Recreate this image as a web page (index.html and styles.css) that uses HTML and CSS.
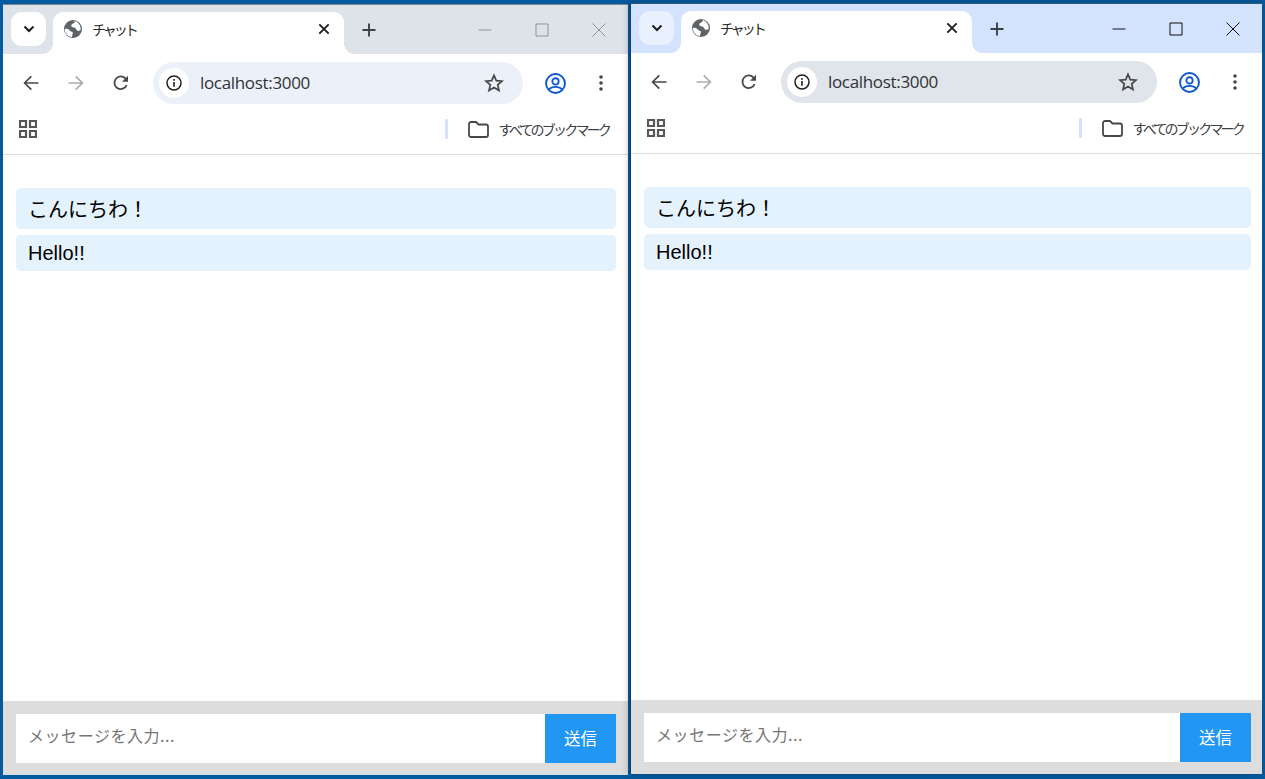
FILE: index.html
```html
<!DOCTYPE html>
<html lang="ja">
<head>
<meta charset="utf-8">
<title>チャット</title>
<link rel="stylesheet" href="styles.css">
</head>
<body>
<svg class="defs" width="0" height="0" aria-hidden="true">
  <symbol id="i-chevron" viewBox="0 0 12 8"><path d="M1.5 1.5 6 6l4.5-4.5" fill="none" stroke="currentColor" stroke-width="2.1"/></symbol>
  <symbol id="i-globe" viewBox="0 0 18 18"><circle cx="9" cy="9" r="9" fill="#5f6368"/><path d="M10.6.9c.2 1.3-.5 2.2-1.6 2.6-1.2.5-1.9 1.2-1.7 2.3.2 1.200 1.300 1.500 2.500 1.700 1.800.3 2.300 1.400 2.900 2.500.5.800 1.200 1.100 2.200.8.600-.2 1.200-.4 1.700-.7.200-1.900-.1-3.700-1.100-5.300C14.300 2.500 12.600 1.300 10.600.9Z" fill="#fff"/><path d="M.7 9.200c1.500-.8 3.100-.5 4.300.6 1 .9 1.500 1.800 2.800 2 1 .2 1.200 1 .9 1.900-.3 1-.6 2.100-.8 3.400C4.100 16.700 1 13.500.7 9.200Z" fill="#fff"/></symbol>
  <symbol id="i-back" viewBox="0 0 16 16"><path d="M15.500 8H1.800M8.300 1.300 1.600 8l6.700 6.700" fill="none" stroke="currentColor" stroke-width="1.700"/></symbol>
  <symbol id="i-forward" viewBox="0 0 16 16"><path d="M.5 8h13.700M7.700 1.300 14.400 8l-6.700 6.700" fill="none" stroke="currentColor" stroke-width="1.700"/></symbol>
  <symbol id="i-reload" viewBox="0 0 16 16"><path d="M13.600 10.100A6.300 6.300 0 1 1 12.500 3.600l1.400 1.500" fill="none" stroke="currentColor" stroke-width="1.800"/><path d="M15 .8v6h-6z" fill="currentColor"/></symbol>
  <symbol id="i-info" viewBox="0 0 16 16"><circle cx="8" cy="8" r="7" fill="none" stroke="currentColor" stroke-width="1.500"/><path d="M7.200 7h1.600v4.800H7.200zM7.200 4h1.600v1.700H7.200z" fill="currentColor"/></symbol>
  <symbol id="i-star" viewBox="0 0 20 20"><path d="m10 2.300 2.300 5.300 5.800.5-4.400 3.800 1.300 5.700-5-3-5 3 1.300-5.700L1.900 8.100l5.800-.5z" fill="none" stroke="currentColor" stroke-width="1.700" stroke-linejoin="miter"/></symbol>
  <symbol id="i-profile" viewBox="0 0 20 20"><circle cx="10" cy="10" r="9" fill="none" stroke="currentColor" stroke-width="1.800"/><circle cx="10" cy="8" r="3" fill="none" stroke="currentColor" stroke-width="1.700"/><path d="M3.800 15.500c1.500-1.600 3.600-2.300 6.200-2.300s4.700.7 6.200 2.300" fill="none" stroke="currentColor" stroke-width="1.700"/></symbol>
  <symbol id="i-kebab" viewBox="0 0 4 16"><circle cx="2" cy="2" r="1.800" fill="currentColor"/><circle cx="2" cy="8" r="1.800" fill="currentColor"/><circle cx="2" cy="14" r="1.800" fill="currentColor"/></symbol>
  <symbol id="i-apps" viewBox="0 0 18 18"><path d="M1 1h6v6H1zM11 1h6v6h-6zM1 11h6v6H1zM11 11h6v6h-6z" fill="none" stroke="currentColor" stroke-width="2.200"/></symbol>
  <symbol id="i-folder" viewBox="0 0 21 17"><path d="M1 3a2 2 0 0 1 2-2h5l2.500 2.500H18a2 2 0 0 1 2 2V14a2 2 0 0 1-2 2H3a2 2 0 0 1-2-2z" fill="none" stroke="currentColor" stroke-width="1.800"/></symbol>
  <symbol id="i-close" viewBox="0 0 12 12"><path d="M1.300 1.300l9.400 9.400M10.700 1.300l-9.400 9.400" fill="none" stroke="currentColor" stroke-width="1.900"/></symbol>
  <symbol id="i-plus" viewBox="0 0 14 14"><path d="M7 .5v13M.5 7h13" fill="none" stroke="currentColor" stroke-width="1.900"/></symbol>
  <symbol id="i-min" viewBox="0 0 14 14"><path d="M.5 7h13" fill="none" stroke="currentColor" stroke-width="1"/></symbol>
  <symbol id="i-max" viewBox="0 0 14 14"><path d="M1 1h12v12H1z" fill="none" stroke="currentColor" stroke-width="1"/></symbol>
  <symbol id="i-x" viewBox="0 0 14 14"><path d="M.5.5l13 13M13.500.5l-13 13" fill="none" stroke="currentColor" stroke-width="1"/></symbol>
</svg>

<section class="window window-inactive">
  <header class="tabstrip">
    <button class="tab-search"><svg class="ic-chevron"><use href="#i-chevron"/></svg></button>
    <div class="tab">
      <svg class="ic-globe"><use href="#i-globe"/></svg>
      <span class="tab-title">チャット</span>
      <svg class="ic-close"><use href="#i-close"/></svg>
    </div>
    <svg class="ic-plus"><use href="#i-plus"/></svg>
    <div class="controls">
      <svg class="ic-win"><use href="#i-min"/></svg>
      <svg class="ic-win"><use href="#i-max"/></svg>
      <svg class="ic-win"><use href="#i-x"/></svg>
    </div>
  </header>
  <nav class="toolbar">
    <svg class="ic-nav"><use href="#i-back"/></svg>
    <svg class="ic-nav ic-disabled"><use href="#i-forward"/></svg>
    <svg class="ic-nav"><use href="#i-reload"/></svg>
    <div class="omnibox">
      <span class="site-info"><svg class="ic-info"><use href="#i-info"/></svg></span>
      <span class="url">localhost:3000</span>
      <svg class="ic-star"><use href="#i-star"/></svg>
    </div>
    <svg class="ic-profile"><use href="#i-profile"/></svg>
    <svg class="ic-kebab"><use href="#i-kebab"/></svg>
  </nav>
  <div class="bookmarks">
    <svg class="ic-apps"><use href="#i-apps"/></svg>
    <span class="bm-sep"></span>
    <svg class="ic-folder"><use href="#i-folder"/></svg>
    <span class="bm-label">すべてのブックマーク</span>
  </div>
  <main class="messages">
    <div class="msg msg-ja">こんにちわ！</div>
    <div class="msg msg-en">Hello!!</div>
  </main>
  <form class="composer">
    <input class="composer-input" type="text" placeholder="メッセージを入力...">
    <button class="composer-send" type="button">送信</button>
  </form>
</section>

<section class="window window-active">
  <header class="tabstrip">
    <button class="tab-search"><svg class="ic-chevron"><use href="#i-chevron"/></svg></button>
    <div class="tab">
      <svg class="ic-globe"><use href="#i-globe"/></svg>
      <span class="tab-title">チャット</span>
      <svg class="ic-close"><use href="#i-close"/></svg>
    </div>
    <svg class="ic-plus"><use href="#i-plus"/></svg>
    <div class="controls">
      <svg class="ic-win"><use href="#i-min"/></svg>
      <svg class="ic-win"><use href="#i-max"/></svg>
      <svg class="ic-win"><use href="#i-x"/></svg>
    </div>
  </header>
  <nav class="toolbar">
    <svg class="ic-nav"><use href="#i-back"/></svg>
    <svg class="ic-nav ic-disabled"><use href="#i-forward"/></svg>
    <svg class="ic-nav"><use href="#i-reload"/></svg>
    <div class="omnibox">
      <span class="site-info"><svg class="ic-info"><use href="#i-info"/></svg></span>
      <span class="url">localhost:3000</span>
      <svg class="ic-star"><use href="#i-star"/></svg>
    </div>
    <svg class="ic-profile"><use href="#i-profile"/></svg>
    <svg class="ic-kebab"><use href="#i-kebab"/></svg>
  </nav>
  <div class="bookmarks">
    <svg class="ic-apps"><use href="#i-apps"/></svg>
    <span class="bm-sep"></span>
    <svg class="ic-folder"><use href="#i-folder"/></svg>
    <span class="bm-label">すべてのブックマーク</span>
  </div>
  <main class="messages">
    <div class="msg msg-ja">こんにちわ！</div>
    <div class="msg msg-en">Hello!!</div>
  </main>
  <form class="composer">
    <input class="composer-input" type="text" placeholder="メッセージを入力...">
    <button class="composer-send" type="button">送信</button>
  </form>
</section>
</body>
</html>
```
FILE: styles.css
```css
* { box-sizing: border-box; }
html, body { margin: 0; height: 100%; overflow: hidden; }
body {
  position: relative;
  width: 1265px;
  height: 779px;
  background: #055b9f;
  font-family: "Liberation Sans", "Noto Sans CJK JP", sans-serif;
}
.defs { position: absolute; }
svg { display: block; flex: none; }

.window {
  position: absolute;
  height: 771px;
  display: flex;
  flex-direction: column;
  background: #fff;
}
.window-inactive { left: 3px; top: 4px; width: 625px; --strip: #dee3e9; --search: #fff; --omni: #ecf1f9; --ctl: #8f9296; --pad-end: 12px; }
.window-active { left: 631px; top: 3px; width: 631px; --strip: #d3e3fd; --search: #e9f1fe; --omni: #e0e4eb; --ctl: #111; --pad-end: 11px; box-shadow: -1px 0 0 #123f6b, -2px 0 7px rgba(0, 0, 0, .28); }

/* Tab strip */
.tabstrip {
  height: 50px;
  flex: none;
  display: flex;
  align-items: flex-start;
  background: var(--strip);
  border-top: 1px solid #7d8a96;
  padding: 7px 0 0 8px;
}
.window-active .tabstrip { border-top-color: #31587f; }
.tab-search {
  width: 35px;
  height: 34px;
  border: 0;
  padding: 0;
  border-radius: 11px;
  background: var(--search);
  color: #1f1f1f;
  display: flex;
  align-items: center;
  justify-content: center;
}
.ic-chevron { width: 12px; height: 8px; }
.tab {
  position: relative;
  margin-left: 7px;
  width: 291px;
  height: 42px;
  background: #fff;
  border-radius: 10px 10px 0 0;
  display: flex;
  align-items: center;
  padding: 0 14px 8px 11px;
}
.tab::before, .tab::after {
  content: "";
  position: absolute;
  bottom: 0;
  width: 10px;
  height: 10px;
}
.tab::before { left: -10px; background: radial-gradient(circle at 0 0, transparent 9.5px, #fff 10px); }
.tab::after { right: -10px; background: radial-gradient(circle at 100% 0, transparent 9.5px, #fff 10px); }
.ic-globe { width: 18px; height: 18px; }
.tab-title {
  margin-left: 10px;
  font: 14px/18px "Noto Sans CJK JP", sans-serif;
  letter-spacing: -3px;
  color: #2a2a2a;
  flex: 1;
}
.ic-close { width: 12px; height: 12px; color: #1f1f1f; }
.ic-plus { width: 14px; height: 14px; margin: 11px 0 0 18px; color: #3c4043; }
.controls {
  margin-left: auto;
  display: flex;
  gap: 43px;
  padding: 11px 22px 0 0;
  color: var(--ctl);
}
.ic-win { width: 14px; height: 14px; }

/* Toolbar */
.toolbar {
  position: relative;
  height: 54px;
  flex: none;
  display: flex;
  align-items: center;
  background: #fff;
  border-radius: 10px 10px 0 0;
  padding: 4px 25px 0 20px;
}
.ic-nav { width: 16px; height: 16px; margin-right: 29px; color: #474747; }
.ic-disabled { color: #adadad; }
.toolbar .ic-nav:nth-of-type(3) { margin-right: 24px; }
.omnibox {
  flex: 1;
  height: 42px;
  margin-right: 22px;
  border-radius: 21px;
  background: var(--omni);
  display: flex;
  align-items: center;
  padding: 0 19px 0 6px;
}
.site-info {
  width: 30px;
  height: 30px;
  border-radius: 50%;
  background: #fff;
  display: flex;
  align-items: center;
  justify-content: center;
  color: #1f1f1f;
}
.ic-info { width: 16px; height: 16px; }
.url {
  margin-left: 11px;
  flex: 1;
  font: 17px/22px "Open Sans", sans-serif;
  letter-spacing: -.33px;
  color: #303336;
}
.ic-star { width: 20px; height: 20px; color: #474747; }
.ic-profile { width: 21px; height: 21px; color: #0b57d0; }
.ic-kebab { width: 4px; height: 16px; margin-left: 33px; color: #474747; }

/* Bookmarks */
.bookmarks {
  height: 47px;
  flex: none;
  display: flex;
  align-items: center;
  background: #fff;
  border-bottom: 1px solid #dcdcdc;
  padding: 0 19px 4px 16px;
}
.ic-apps { width: 18px; height: 18px; color: #555; }
.bm-sep {
  margin-left: auto;
  width: 3px;
  height: 20px;
  border-radius: 1px;
  background: #d3e3fd;
}
.ic-folder { width: 21px; height: 17px; margin-left: 20px; color: #474747; }
.bm-label {
  margin-left: 10px;
  font: 14px/18px "Noto Sans CJK JP", sans-serif;
  letter-spacing: -2.8px;
  color: #3c4043;
}

/* Messages */
.messages {
  flex: 1;
  min-height: 0;
  padding: 33px var(--pad-end) 0 13px;
  display: flex;
  flex-direction: column;
  gap: 6px;
}
.msg {
  background: #e3f2fd;
  border-radius: 5px;
  color: #000;
  font-size: 20px;
}
.msg-ja {
  height: 41px;
  padding: 0 12px;
  line-height: 42px;
  font-family: "Noto Sans CJK JP", sans-serif;
}
.msg-en {
  height: 36px;
  padding: 0 12px;
  line-height: 36px;
}

/* Composer */
.composer {
  height: 74px;
  flex: none;
  display: flex;
  align-items: flex-start;
  background: #ddd;
  padding: 13px var(--pad-end) 0 13px;
}
.composer-input {
  flex: 1;
  min-width: 0;
  height: 49px;
  border: 0;
  outline: 0;
  padding: 0 12px 7px;
  background: #fff;
  font: 16px "Noto Sans CJK JP", sans-serif;
  letter-spacing: .55px;
}
.composer-input::placeholder { color: #757575; opacity: 1; }
.composer-send {
  width: 71px;
  height: 49px;
  border: 0;
  padding: 0 0 2px;
  background: #2196f3;
  color: #fff;
  font: 16.5px "Noto Sans CJK JP", sans-serif;
}
```
